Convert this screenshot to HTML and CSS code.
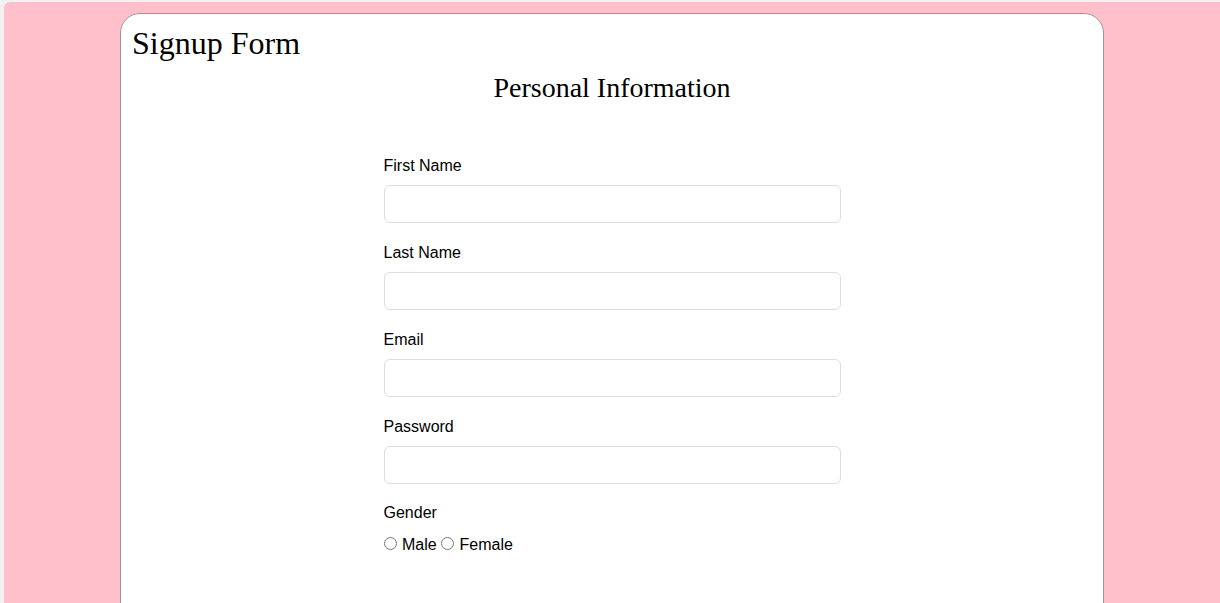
FILE: index.html
```html
<!DOCTYPE html>
<html>
<head>
<meta charset="utf-8">
<title>Signup Form</title>
<link rel="stylesheet" href="styles.css">
</head>
<body>
<div class="card">
  <h1 class="title">Signup Form</h1>
  <h2 class="section">Personal Information</h2>
  <form class="form">
    <div class="group">
      <label class="label" for="fn">First Name</label>
      <input class="field" id="fn" type="text">
    </div>
    <div class="group">
      <label class="label" for="ln">Last Name</label>
      <input class="field" id="ln" type="text">
    </div>
    <div class="group">
      <label class="label" for="em">Email</label>
      <input class="field" id="em" type="email">
    </div>
    <div class="group">
      <label class="label" for="pw">Password</label>
      <input class="field" id="pw" type="password">
    </div>
    <div class="group">
      <span class="label gender">Gender</span>
      <div class="radios"><input class="radio" type="radio" name="g" id="m"> <label for="m">Male</label> <input class="radio" type="radio" name="g" id="f"> <label for="f">Female</label></div>
    </div>
  </form>
</div>
</body>
</html>
```
FILE: styles.css
```css
html {
  background: #f2f2f2;
  height: 100%;
}
body {
  margin: 2px 0 0 4px;
  background: #ffc0cb;
  border-top-left-radius: 6px;
  min-height: calc(100% - 2px);
  padding-top: 11px;
  box-sizing: border-box;
  font-family: "Liberation Serif", "Times New Roman", serif;
  overflow: hidden;
}
.card {
  margin-left: 116px;
  width: 984px;
  box-sizing: border-box;
  background: #fff;
  border: 1px solid #999;
  border-radius: 20px;
  padding: 11px 11px 60px;
  min-height: 700px;
}
.title {
  margin: 0;
  font-size: 32px;
  font-weight: normal;
}
.section {
  margin: 10px 0 0;
  font-size: 28px;
  font-weight: normal;
  text-align: center;
}
.form {
  width: 457px;
  margin: 53px auto 0;
  font-family: "Liberation Sans", Arial, sans-serif;
  font-size: 16px;
}
.group {
  display: flex;
  flex-direction: column;
  margin-bottom: 21px;
}
.group:nth-child(n+4) {
  margin-bottom: 20px;
}
.label {
  display: block;
  margin-bottom: 10px;
}
.gender {
  margin-bottom: 12px;
}
.field {
  height: 38px;
  box-sizing: border-box;
  border: 1px solid #ddd;
  border-radius: 6px;
  padding: 0 10px;
  font-size: 16px;
}
.radios {
  font-size: 16px;
}
.radio {
  margin: 3px 1px 0 0;
  width: 13px;
  height: 13px;
}
```
